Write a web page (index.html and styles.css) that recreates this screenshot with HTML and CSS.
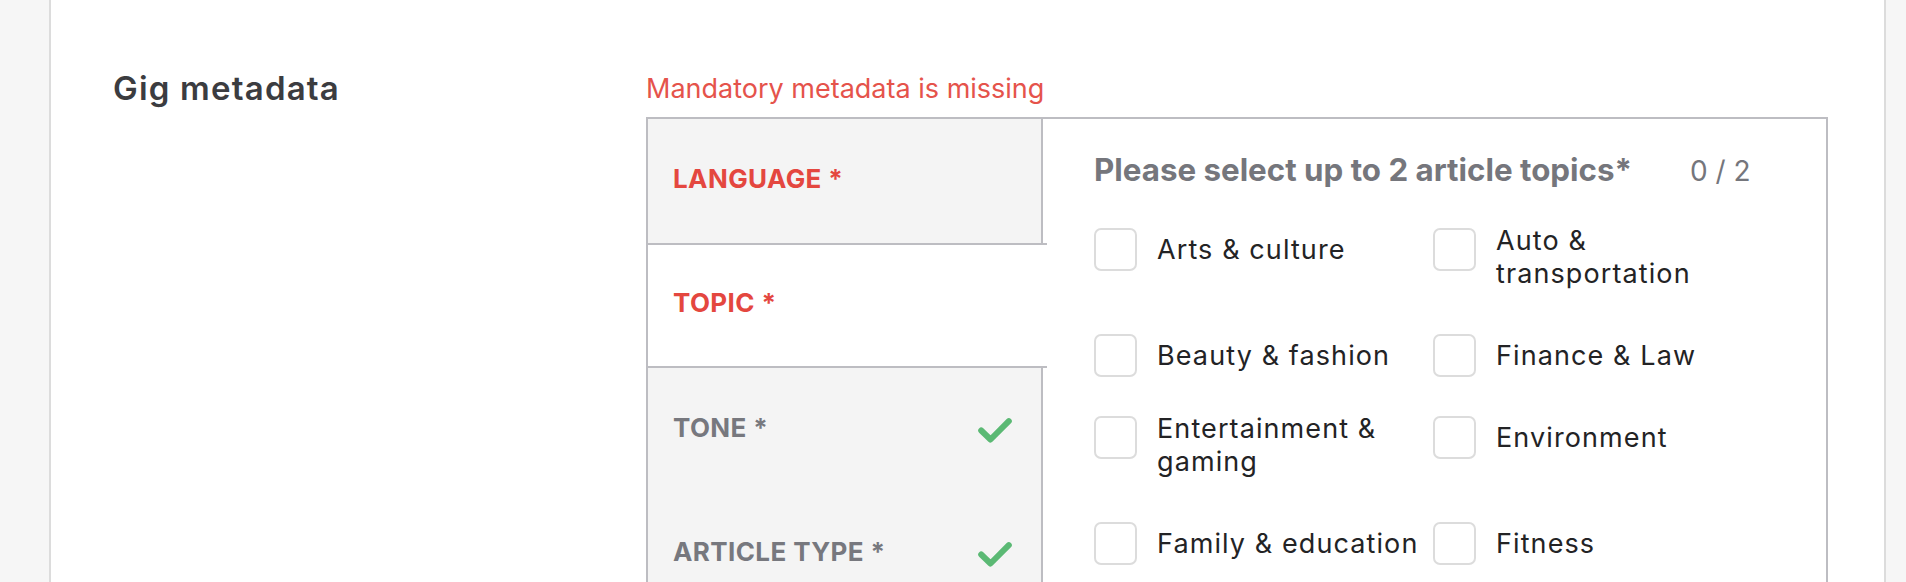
FILE: index.html
```html
<!DOCTYPE html>
<html lang="en">
<head>
<meta charset="utf-8">
<title>Gig metadata</title>
<link rel="stylesheet" href="styles.css">
</head>
<body>
<div class="page">
  <div class="card">
    <section class="meta">
      <h2 class="meta-title">Gig metadata</h2>
      <div class="meta-body">
        <p class="error">Mandatory metadata is missing</p>
        <div class="panel">
          <ul class="tabs">
            <li class="tab tab--error"><span class="tab-label">LANGUAGE *</span></li>
            <li class="tab tab--error tab--active"><span class="tab-label">TOPIC *</span></li>
            <li class="tab"><span class="tab-label">TONE *</span>
              <svg class="check" viewBox="0 0 34 25" width="34" height="25" aria-hidden="true"><polyline points="3.2,12.5 12.5,21.5 30.8,3.2" /></svg>
            </li>
            <li class="tab"><span class="tab-label">ARTICLE TYPE *</span>
              <svg class="check" viewBox="0 0 34 25" width="34" height="25" aria-hidden="true"><polyline points="3.2,12.5 12.5,21.5 30.8,3.2" /></svg>
            </li>
          </ul>
          <div class="content">
            <div class="content-head">
              <h3 class="content-title">Please select up to 2 article topics*</h3>
              <span class="count">0 / 2</span>
            </div>
            <div class="options">
              <label class="opt"><span class="box"></span><span class="opt-label">Arts &amp; culture</span></label>
              <label class="opt opt--wrap"><span class="box"></span><span class="opt-label">Auto &amp; transportation</span></label>
              <label class="opt"><span class="box"></span><span class="opt-label">Beauty &amp; fashion</span></label>
              <label class="opt"><span class="box"></span><span class="opt-label">Finance &amp; Law</span></label>
              <label class="opt opt--wrap"><span class="box"></span><span class="opt-label">Entertainment &amp; gaming</span></label>
              <label class="opt"><span class="box"></span><span class="opt-label">Environment</span></label>
              <label class="opt"><span class="box"></span><span class="opt-label">Family &amp; education</span></label>
              <label class="opt"><span class="box"></span><span class="opt-label">Fitness</span></label>
            </div>
          </div>
        </div>
      </div>
    </section>
  </div>
</div>
</body>
</html>
```
FILE: styles.css
```css
html, body {
  margin: 0;
  padding: 0;
}

body {
  background: #f6f6f6;
  font-family: Inter, "Noto Sans", sans-serif;
  -webkit-font-smoothing: antialiased;
}

.page {
  display: flex;
  height: 582px;
  overflow: hidden;
  box-sizing: border-box;
  padding: 0 20px 0 49px;
}

.card {
  flex: 1;
  background: #fff;
  border-left: 2px solid #dcdcdc;
  border-right: 2px solid #dcdcdc;
}

.meta {
  display: grid;
  grid-template-columns: 533px 1fr;
  padding: 68px 56px 0 62px;
}

.meta-title {
  margin: 0;
  font-size: 33px;
  line-height: 40px;
  font-weight: 600;
  letter-spacing: 1.2px;
  color: #3b3c40;
}

.meta-body {
  padding-top: 3px;
}

.error {
  margin: 0 0 10px;
  font-size: 27px;
  line-height: 36px;
  color: #e5534b;
}

.panel {
  display: flex;
  border: 2px solid #bdbdc2;
  border-bottom: none;
  height: 600px;
}

.tabs {
  list-style: none;
  margin: 0;
  padding: 0;
  width: 395px;
  flex: none;
}

.tab {
  height: 124px;
  box-sizing: border-box;
  display: flex;
  align-items: center;
  justify-content: space-between;
  padding: 0 29px 0 25px;
  background: #f4f4f4;
  border-right: 2px solid #bdbdc2;
  font-weight: 700;
  font-size: 26px;
  letter-spacing: 0.4px;
  color: #77787e;
}

.tab-label {
  padding-bottom: 6px;
}

.tab--error {
  color: #e4473f;
}

.tab--active {
  position: relative;
  z-index: 1;
  height: 125px;
  background: #fff;
  border-right: none;
  border-top: 2px solid #bdbdc2;
  border-bottom: 2px solid #bdbdc2;
  margin-right: -4px;
}

.check {
  display: block;
  fill: none;
  stroke: #5bb974;
  stroke-width: 6;
  stroke-linecap: round;
  stroke-linejoin: round;
}

.content {
  flex: 1;
  padding: 33px 0 0 51px;
}

.content-head {
  display: flex;
  align-items: baseline;
  gap: 58px;
}

.content-title {
  margin: 0;
  font-size: 31.3px;
  line-height: 36px;
  font-weight: 700;
  color: #75767c;
}

.count {
  font-size: 28px;
  color: #75767c;
}

.options {
  display: grid;
  grid-template-columns: 330px 330px;
  column-gap: 9px;
  row-gap: 39px;
  margin-top: 40px;
  align-items: start;
}

.opt {
  display: flex;
  align-items: flex-start;
  gap: 20px;
}

.box {
  flex: none;
  width: 43px;
  height: 43px;
  box-sizing: border-box;
  border: 2px solid #dcdcdc;
  border-radius: 7px;
  background: #fff;
}

.opt-label {
  font-size: 27px;
  line-height: 33px;
  letter-spacing: 1.1px;
  color: #232325;
  margin-top: 5px;
}

.opt--wrap .opt-label {
  margin-top: -4px;
  padding-bottom: 5px;
}
```
